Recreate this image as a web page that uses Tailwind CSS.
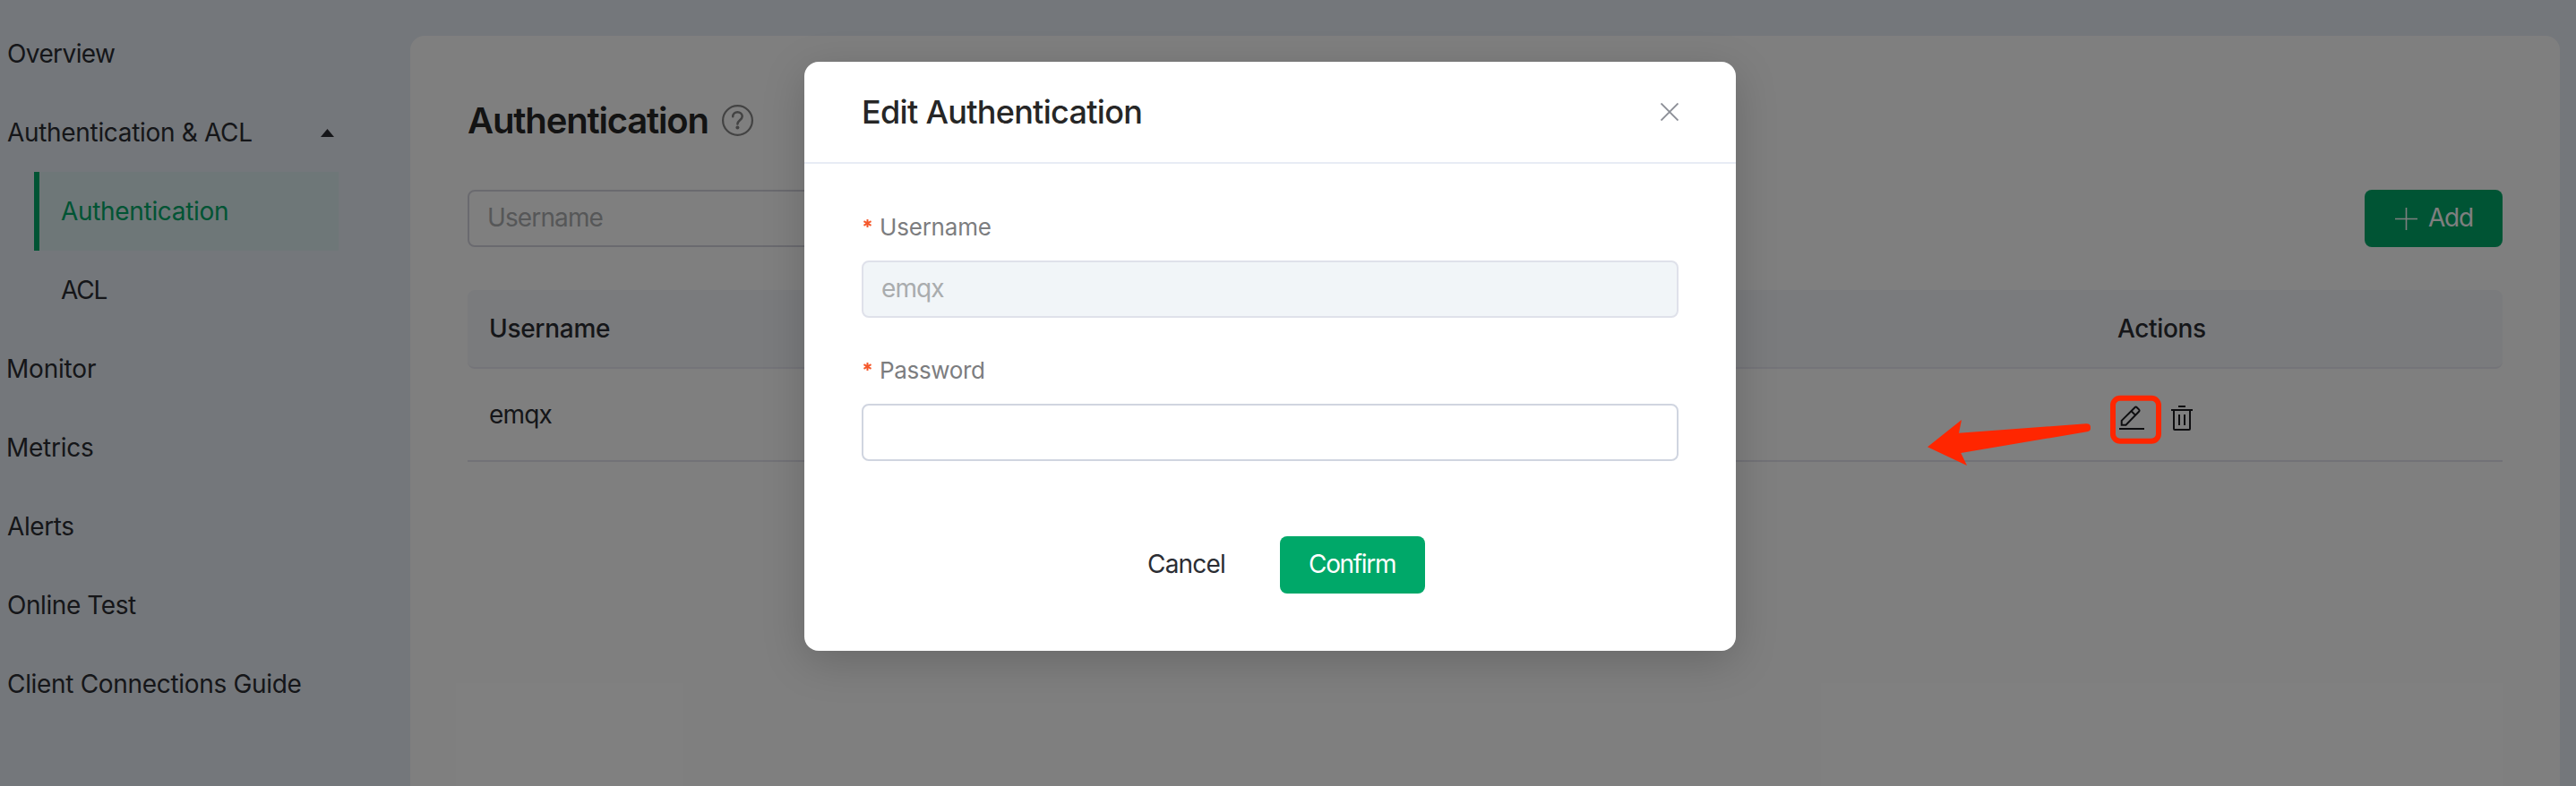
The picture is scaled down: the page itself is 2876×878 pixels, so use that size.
<!DOCTYPE html>
<html lang="en">
<head>
<meta charset="utf-8">
<title>Edit Authentication</title>
<script src="https://cdn.jsdelivr.net/npm/@tailwindcss/browser@4"></script>
</head>
<body class="relative h-[878px] w-[2876px] overflow-hidden bg-[#e9eff6] font-['Inter','Liberation_Sans',sans-serif] text-[28px] text-[#2b2d33]">

  <div class="flex h-full">
    <!-- Sidebar -->
    <nav class="w-[458px] shrink-0 pt-4 tracking-[-0.32px]">
      <a class="flex h-[88px] items-center pl-2 tracking-[-0.6px]">Overview</a>
      <a class="flex h-[88px] items-center justify-between pl-2 pr-[85px]">
        Authentication &amp; ACL
        <svg class="-mt-[31px] h-[9px] w-[15px] translate-y-4" viewBox="0 0 15 9"><path d="M7.5 0 15 9H0z" fill="#2b2d33"/></svg>
      </a>
      <a class="ml-[38px] flex h-[88px] w-[340px] items-center border-l-[6px] border-[#00a869] bg-[#ddeef0] pl-6 text-[#00a869]">Authentication</a>
      <a class="ml-[38px] flex h-[88px] items-center pl-[30px] tracking-[-1.2px]">ACL</a>
      <a class="flex h-[88px] items-center pl-[7px] tracking-[-0.2px]">Monitor</a>
      <a class="flex h-[88px] items-center pl-[7px] tracking-[-0.26px]">Metrics</a>
      <a class="flex h-[88px] items-center pl-2 tracking-[-0.4px]">Alerts</a>
      <a class="flex h-[88px] items-center pl-2 tracking-[-0.42px]">Online Test</a>
      <a class="flex h-[88px] items-center pl-2">Client Connections Guide</a>
    </nav>

    <!-- Content card -->
    <main class="mt-10 w-[2400px] rounded-t-2xl bg-white px-16 pt-[69px]">
      <div class="flex h-[52px] items-center">
        <h1 class="w-[284px] text-[40px] font-semibold leading-[52px] tracking-[-1.16px] text-[#262626]">Authentication</h1>
        <svg class="-mt-px size-[35px]" viewBox="0 0 35 35" fill="none" stroke="#868686" stroke-width="2.2" stroke-linecap="round">
          <circle cx="17.5" cy="17.5" r="16.4"/>
          <path d="M12.2 13.3c0-3 2.2-5 5.2-5s5.3 2 5.3 4.8c0 4-5.3 4.4-5.3 8.4" stroke-width="2.5"/>
          <circle cx="17.4" cy="25.5" r="2" fill="#868686" stroke="none"/>
        </svg>
      </div>

      <div class="mt-[51px] flex justify-between">
        <div class="flex h-16 w-[480px] items-center rounded-lg border-2 border-[#d5d5df] pb-0.5 pl-5 tracking-[-0.88px] text-[#acaeb1]">Username</div>
        <button class="flex h-16 w-[154px] items-center rounded-lg bg-[#00a869] pb-0.5 pl-[34px] tracking-[-1.2px] text-white">
          <svg class="mt-0.5 size-[25px]" viewBox="0 0 25 25" stroke="#fff" stroke-width="1.6"><path d="M12.5 0v25M0 12.5h25"/></svg>
          <span class="ml-3">Add</span>
        </button>
      </div>

      <div class="mt-12 grid h-[88px] grid-cols-[1818px_1fr] items-center rounded-lg border-b-2 border-[#e9e9f2] bg-[#f5f7fa] pl-6 font-medium">
        <div class="tracking-[-0.3px]">Username</div>
        <div class="tracking-[-0.36px]">Actions</div>
      </div>
      <div class="grid h-[104px] grid-cols-[1818px_1fr] items-center border-b-2 border-[#e4e4ef] pl-6">
        <div class="tracking-[-0.8px]">emqx</div>
        <div class="flex">
          <svg class="ml-px mt-[5px] h-[30px] w-[84px]" viewBox="0 0 84 30" fill="none" stroke="#1c1d20" stroke-width="2">
            <path d="M3.7 23.7v-4.8L18.4 4.2q1.2-1.2 2.4 0l2.2 2.2q1.2 1.2 0 2.4L8.5 23.7z"/>
            <path d="m14.6 8.3 4.6 4.6M1 28h28"/>
            <path d="M67 3h8M59 7h24M62 7v21q0 1 1 1h16q1 0 1-1V7M68 12v12M74 12v12"/>
          </svg>
        </div>
      </div>
    </main>
  </div>

  <!-- Dimming layer and dialog -->
  <div class="absolute inset-0 bg-black/50 pl-[898px] pt-[69px]">
    <section class="h-[658px] w-[1040px] rounded-2xl bg-white shadow-[0_12px_48px_0_rgba(0,0,0,0.18)]">
      <header class="flex h-[114px] items-center justify-between border-b-2 border-[#e8ecf5] pl-16 pr-16">
        <h2 class="text-[36px] font-medium leading-none tracking-[-0.7px] text-[#262626]">Edit Authentication</h2>
        <svg class="size-5" viewBox="0 0 20 20" stroke="#8b8e96" stroke-width="1.9"><path d="m.5.5 19 19m0-19-19 19"/></svg>
      </header>
      <div class="px-16 pt-[54px]">
        <div class="flex h-8 items-center text-[26px] text-[#7c7d7f]">
          <svg class="ml-[2px] mt-[-8px] size-[9px] overflow-visible" viewBox="0 0 9 10" stroke="#f5582b" stroke-width="2.2"><path d="M4.5 0v10M0 2.4l9 5.2M9 2.4 0 7.6"/></svg>
          <span class="ml-[9px] tracking-[-0.2px]">Username</span>
        </div>
        <div class="mt-[22px] flex h-16 items-center rounded-lg border-2 border-[#dfe1ea] bg-[#f1f5f8] pb-0.5 pl-5 tracking-[-0.9px] text-[#a9acae]">emqx</div>
        <div class="mt-[42px] flex h-8 items-center text-[26px] text-[#7c7d7f]">
          <svg class="ml-[2px] mt-[-8px] size-[9px] overflow-visible" viewBox="0 0 9 10" stroke="#f5582b" stroke-width="2.2"><path d="M4.5 0v10M0 2.4l9 5.2M9 2.4 0 7.6"/></svg>
          <span class="ml-[9px] tracking-[-0.34px]">Password</span>
        </div>
        <div class="mt-[22px] h-16 rounded-lg border-2 border-[#d0d5e0]"></div>
        <div class="mt-[84px] flex items-center">
          <button class="ml-[319px] h-16 w-[148px] pb-0.5 text-left tracking-[-0.8px]">Cancel</button>
          <button class="h-16 w-[162px] rounded-lg bg-[#00a869] pb-0.5 pl-8 text-left tracking-[-1.32px] text-white">Confirm</button>
        </div>
      </div>
    </section>
  </div>

  <!-- Annotation: highlighted edit icon and arrow -->
  <svg class="absolute left-[2130px] top-[420px] h-[120px] w-[300px]" viewBox="0 0 300 120">
    <path fill="#ff2600" d="M22 79.3 60 49l-3 14.7L199 53.2q5-.2 5 3.8v1.8q0 3-4 3.4L59.3 86 66 100z"/>
    <rect x="229" y="24.7" width="51" height="48" rx="8" fill="none" stroke="#ff2600" stroke-width="6"/>
  </svg>
</body>
</html>
